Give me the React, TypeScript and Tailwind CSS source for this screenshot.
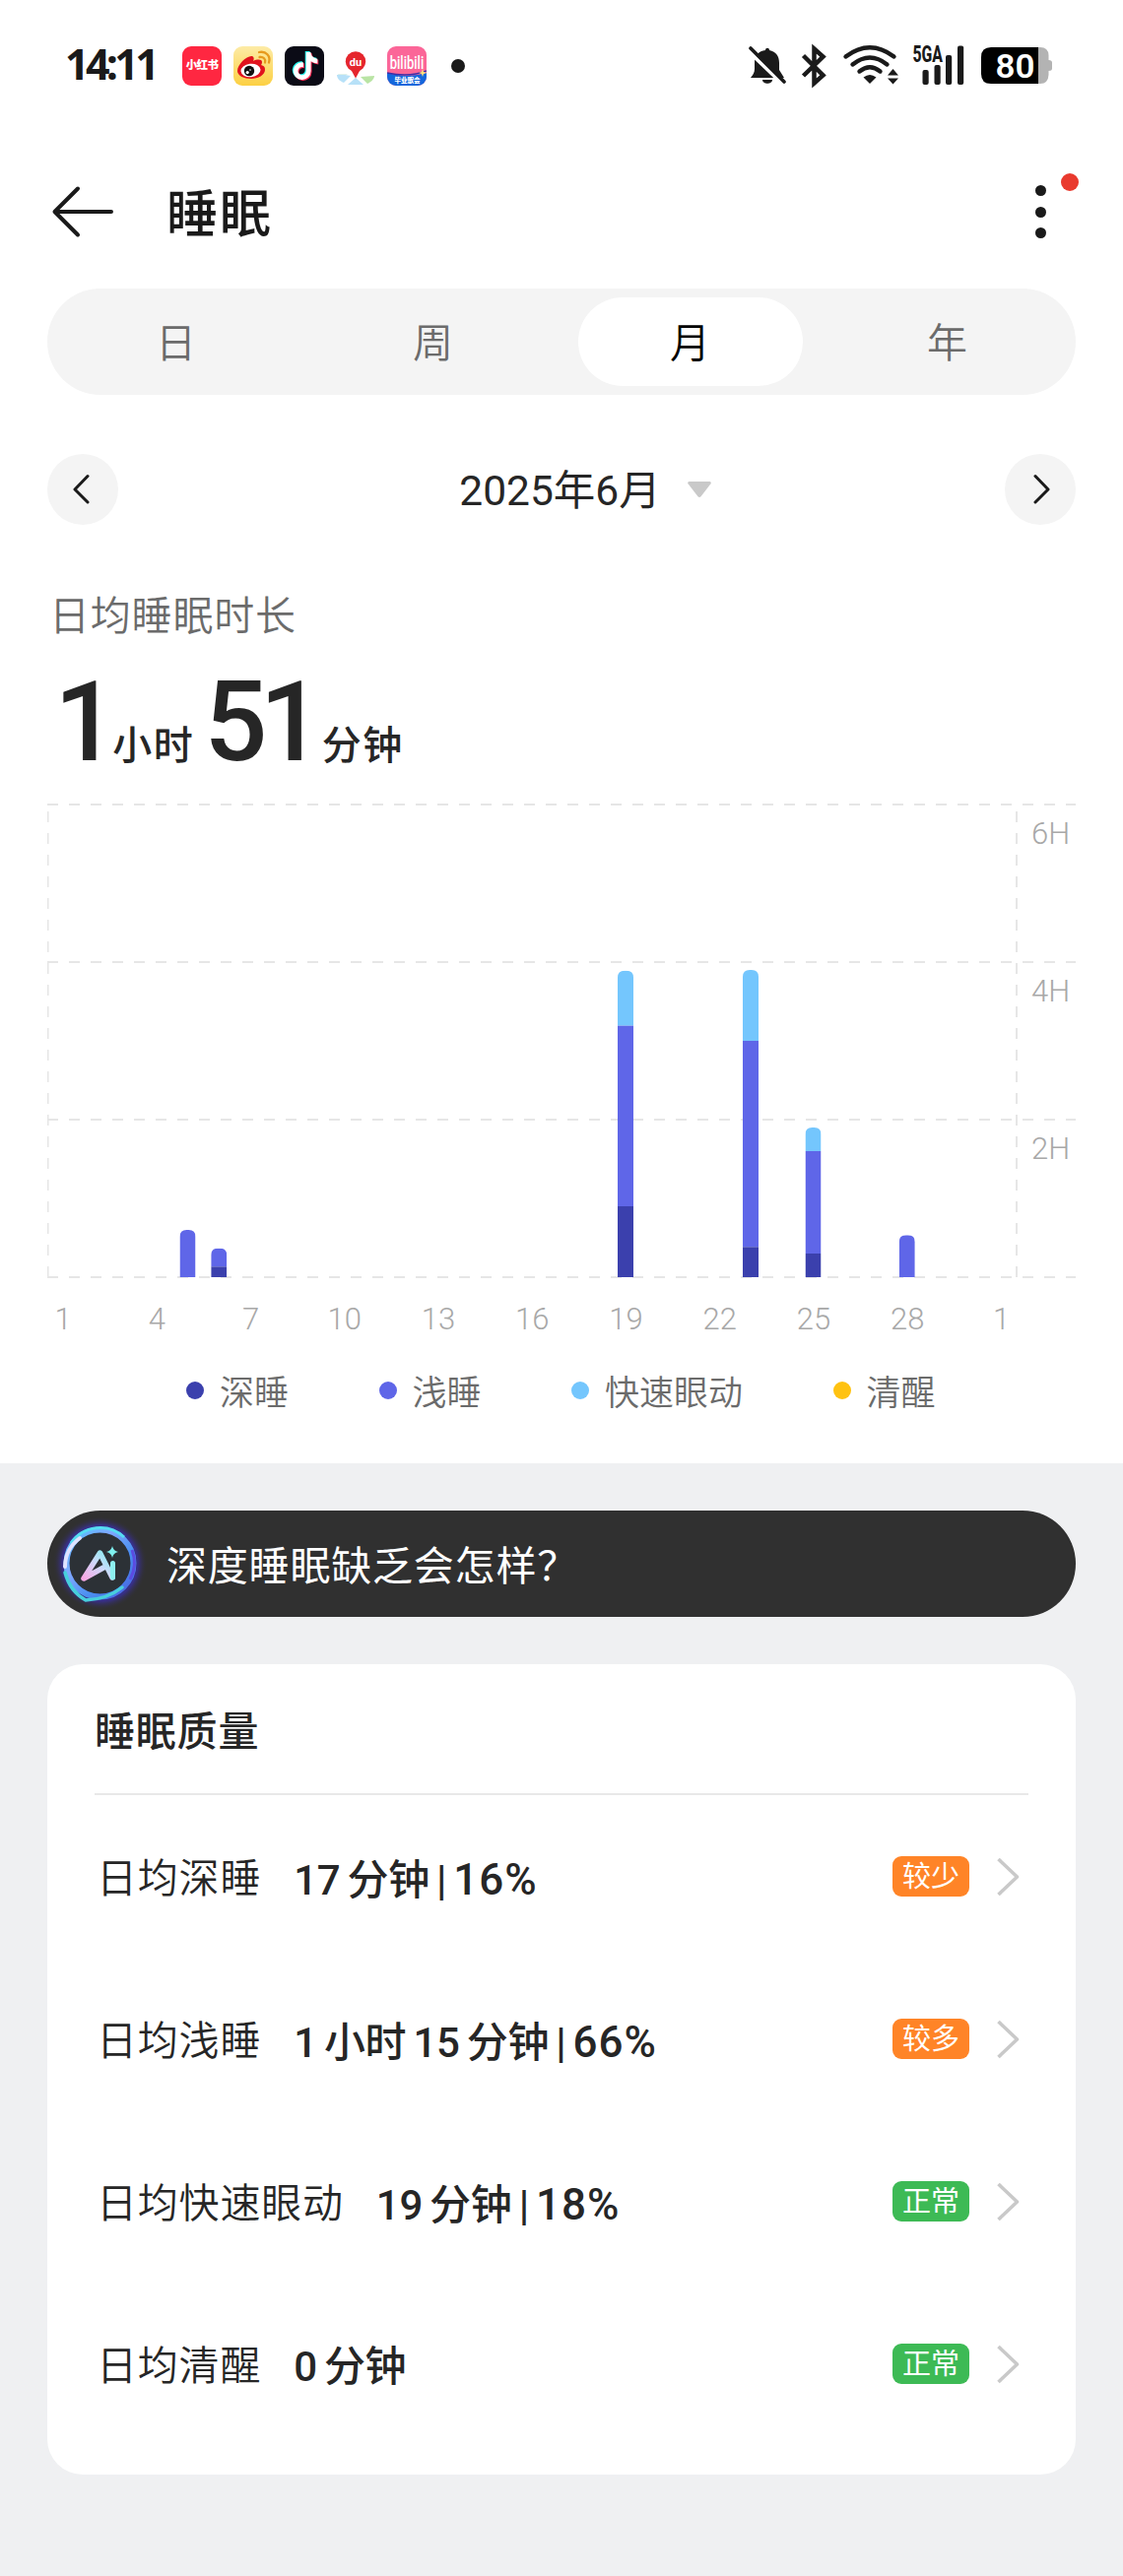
import React, { useState } from 'react';
import { FaTiktok } from 'react-icons/fa';

const FONT = "font-[Roboto,'Noto_Sans_CJK_SC',sans-serif]";

const COLORS = {
  deep: '#3b40ad',
  light: '#5f66e8',
  rem: '#74c6fd',
  awake: '#ffc211',
};

const TABS = ['日', '周', '月', '年'];

const LEGEND = [
  { label: '深睡', color: COLORS.deep },
  { label: '浅睡', color: COLORS.light },
  { label: '快速眼动', color: COLORS.rem },
  { label: '清醒', color: COLORS.awake },
];

// minutes of each stage, keyed by day of month
const SLEEP_DATA = [
  { day: 5, deep: 0, light: 36, rem: 0 },
  { day: 6, deep: 8, light: 14, rem: 0 },
  { day: 19, deep: 54, light: 137.5, rem: 42 },
  { day: 23, deep: 23, light: 157, rem: 54 },
  { day: 25, deep: 18, light: 78, rem: 18 },
  { day: 28, deep: 0, light: 32, rem: 0 },
];

const QUALITY = [
  { label: '日均深睡', value: '17 分钟', percent: '16%', tag: '较少', good: false },
  { label: '日均浅睡', value: '1 小时 15 分钟', percent: '66%', tag: '较多', good: false },
  { label: '日均快速眼动', value: '19 分钟', percent: '18%', tag: '正常', good: true },
  { label: '日均清醒', value: '0 分钟', percent: '', tag: '正常', good: true },
];

const AppIcons = () => (
  <div className="ml-[29px] flex items-center gap-3">
    <div className="flex size-10 items-center justify-center rounded-[9px] bg-[#ff2741] text-[11.5px] font-black tracking-[-0.6px] text-white">
      小红书
    </div>
    <svg className="size-10" viewBox="0 0 40 40">
      <defs>
        <linearGradient id="weibo" x1="0" y1="0" x2="0" y2="1">
          <stop offset="0" stopColor="#fdeba6" />
          <stop offset="1" stopColor="#fcd043" />
        </linearGradient>
      </defs>
      <rect width="40" height="40" rx="9" fill="url(#weibo)" />
      <path d="M4 25C4 18 14 9 19 10c2 1 2 3 1 5 4-2 9-2 9 1 0 2-1 3-1 3 4 1 4 3 4 5 0 5-7 9-14 9S4 30 4 25z" fill="#e1131d" />
      <ellipse cx="17.500" cy="24.500" rx="10" ry="6.800" fill="#fff" transform="rotate(-6 17.5 24.5)" />
      <circle cx="16" cy="25" r="5.200" fill="#111" />
      <circle cx="14.200" cy="26.600" r="1.600" fill="#fff" />
      <circle cx="17" cy="24" r=".8" fill="#fff" />
      <path d="M26.500 11c4-.5 6.500 2 5.500 5.500M26 6c7-1.500 12 4 10 10.500" fill="none" stroke="#e79a1e" strokeWidth="2.300" strokeLinecap="round" />
    </svg>
    <div className="relative size-10 rounded-[9px] bg-[#0b0b16]">
      <FaTiktok className="absolute left-[6px] top-[5px] size-[28px] text-[#25f4ee]" />
      <FaTiktok className="absolute left-[8px] top-[7px] size-[28px] text-[#fe2c55]" />
      <FaTiktok className="absolute left-[7px] top-[6px] size-[28px] text-white" />
    </div>
    <svg className="size-10" viewBox="0 0 40 40">
      <path d="M2 28h10l-5 4c-3-1-5-2-5-4z" fill="#dff1ea" />
      <path d="M1 29h8l6 1-7 7C3 35 1 32 1 29z" fill="#b7e1f8" />
      <path d="M20 32l8 7H12z" fill="#b7e1f8" />
      <path d="M25 31l14-1c0 3-3 6-7 8z" fill="#b9e4a4" />
      <path d="M20 32.500l-7-13h14z" fill="#e5262d" />
      <circle cx="20" cy="15.500" r="10.200" fill="#e5262d" />
      <text x="20" y="19.500" textAnchor="middle" fontSize="11" fontWeight="700" fill="#fff">du</text>
    </svg>
    <svg className="size-10" viewBox="0 0 40 40">
      <defs>
        <clipPath id="bili"><rect width="40" height="40" rx="9" /></clipPath>
      </defs>
      <g clipPath="url(#bili)">
        <rect width="40" height="40" fill="#fb6698" />
        <path d="M0 27q20 6 40 0v13H0z" fill="#1467dc" />
        <path d="M0 27q22 5 40-2" fill="none" stroke="#3b2fa8" strokeWidth="1.500" />
        <path d="M36 23l1 3 3 1-3 1-1 3-1-3-3-1 3-1z" fill="#ffe27a" />
      </g>
      <text x="20" y="17" textAnchor="middle" fontSize="13" fontWeight="500" fill="#fff" transform="scale(1 1.35)">bilibili</text>
      <text x="20.500" y="36.500" textAnchor="middle" fontSize="6.500" fontWeight="900" fill="#fff">毕业歌会</text>
    </svg>
    <span className="ml-[13px] size-3.5 rounded-full bg-[#1a1a1a]" />
  </div>
);

const SystemIcons = () => (
  <svg className="h-[68px] w-[312px]" viewBox="758 32 312 68" fill="#1a1a1a">
    {/* muted bell */}
    <path d="M777 50c0-3 4-3 4 0 7 1.500 10 6 10 13v7l5 8h-34c2-3 4-5 4-9v-7c0-7 4-11 11-12z" />
    <path d="M774 80h10c0 5-10 5-10 0z" />
    <path d="M760.500 51.500l36.500 35" stroke="#fff" strokeWidth="4" />
    <path d="M762 48l34 34" stroke="#1a1a1a" strokeWidth="3.600" strokeLinecap="round" />
    {/* bluetooth */}
    <path d="M815.500 55.500l20 20-9 8V48.500l9 8-20 19.500" fill="none" stroke="#1a1a1a" strokeWidth="4.500" />
    {/* wifi */}
    <g fill="none" stroke="#1a1a1a" strokeWidth="4.400" strokeLinecap="round">
      <path d="M858.500 56.500q24.500-18.500 49 0" />
      <path d="M865.500 64.500q17.500-14 35 0" />
      <path d="M872.500 71.500q10.500-8.500 21 0" />
    </g>
    <path d="M876.500 77.500q6.500-5 13 0l-6.500 6.500z" />
    <path d="M901 75.500l5.500-6.500 5.500 6.500zM901 78.500l5.500 6 5.500-6z" />
    {/* mobile signal */}
    <text x="926.500" y="61.500" fontSize="23" fontWeight="800" textLength="30.500" lengthAdjust="spacingAndGlyphs">5GA</text>
    <rect x="936.500" y="70" width="6.200" height="15" rx="2" />
    <rect x="948.500" y="65" width="6.200" height="20" rx="2" />
    <rect x="960" y="55" width="6.200" height="30" rx="2" />
    <rect x="972" y="45.500" width="6.200" height="39.500" rx="2" />
    {/* battery */}
    <path d="M1054 47h2q8 0 8.500 8v5q3.500 0 3.500 2.500v6q0 2.500-3.500 2.500v4q-.5 9-8.500 9h-2z" fill="#b3b3b3" />
    <path d="M1006 47h48v37h-48q-10 0-10-10V57q0-10 10-10z" fill="#000" />
    <text x="1010.500" y="77.500" fontSize="34" fontWeight="600" fill="#fff" textLength="40" lengthAdjust="spacingAndGlyphs">80</text>
  </svg>
);

const StatusBar = () => (
  <div className="flex h-[137px] items-center justify-between pb-1 pl-[66px] pr-[70px]">
    <div className="flex items-center">
      <span className="w-[90px] whitespace-nowrap pb-1 font-['Open_Sans'] text-[43px] font-bold leading-none tracking-[-3.700px] text-[#1a1a1a]">14:11</span>
      <AppIcons />
    </div>
    <SystemIcons />
  </div>
);

const Header = () => (
  <header className="flex h-[156px] items-center pl-[52px] pr-[48px]">
    <svg className="h-[54px] w-16" viewBox="0 0 64 54" fill="none" stroke="#1a1a1a" strokeWidth="4" strokeLinecap="round" strokeLinejoin="round">
      <path d="M27 3.500L3.500 27L27 50.500M3.500 27H61" />
    </svg>
    <h1 className="ml-[53px] pt-[7px] text-[52px] font-medium leading-none tracking-[2px] text-[#1a1a1a]">睡眠</h1>
    <div className="relative ml-auto flex w-[72px] flex-col items-center gap-[10.500px]">
      <span className="size-[11px] rounded-full bg-[#1a1a1a]" />
      <span className="size-[11px] rounded-full bg-[#1a1a1a]" />
      <span className="size-[11px] rounded-full bg-[#1a1a1a]" />
      <span className="absolute -top-[12px] left-[57px] size-[18px] rounded-full bg-[#e93a2e]" />
    </div>
  </header>
);

const RoundButton: React.FC<{ d: string }> = ({ d }) => (
  <button className="flex size-[72px] items-center justify-center rounded-full bg-[#f4f4f4]">
    <svg className="size-8" viewBox="0 0 32 32" fill="none" stroke="#1a1a1a" strokeWidth="3" strokeLinecap="round" strokeLinejoin="round">
      <path d={d} />
    </svg>
  </button>
);

const CHART_TOP = 1;
const HOUR = 80;
const BASE = CHART_TOP + 6 * HOUR;
const dayX = (day: number) => 15.5 + (day - 1) * 31.75;

const SleepChart = () => (
  <svg className="h-[550px] w-[1044px]" viewBox="0 0 1044 550">
    <g stroke="#e6e6e6" strokeWidth="2" strokeDasharray="11 11">
      {[0, 2, 4, 6].map(h => (
        <line key={h} x1={0} x2={1044} y1={BASE - h * HOUR} y2={BASE - h * HOUR} />
      ))}
      <line x1={0.5} x2={0.5} y1={BASE} y2={CHART_TOP} />
      <line x1={984} x2={984} y1={BASE} y2={CHART_TOP} />
    </g>
    <g fontSize="31" fontWeight="300" fill="#a8a8a8">
      {[2, 4, 6].map(h => (
        <text key={h} x={999} y={BASE - h * HOUR + 40}>{h}H</text>
      ))}
      {[1, 4, 7, 10, 13, 16, 19, 22, 25, 28, 31].map(day => (
        <text key={day} x={dayX(day) + 0.5} y={533.5} textAnchor="middle">{day === 31 ? 1 : day}</text>
      ))}
    </g>
    {SLEEP_DATA.map(({ day, deep, light, rem }) => {
      const px = (min: number) => (min / 60) * HOUR;
      const x = dayX(day) - 8;
      const total = px(deep + light + rem);
      return (
        <g key={day}>
          <clipPath id={`bar-${day}`}>
            <path d={`M${x} ${BASE}v${7 - total}q0-7 7-7h2q7 0 7 7v${total - 7}z`} />
          </clipPath>
          <g clipPath={`url(#bar-${day})`}>
            <rect x={x} y={BASE - total} width={16} height={px(rem)} fill={COLORS.rem} />
            <rect x={x} y={BASE - px(deep + light)} width={16} height={px(light)} fill={COLORS.light} />
            <rect x={x} y={BASE - px(deep)} width={16} height={px(deep)} fill={COLORS.deep} />
          </g>
        </g>
      );
    })}
  </svg>
);

const AiBadge = () => (
  <svg className="size-[108px]" viewBox="0 0 108 108" fill="none">
    <defs>
      <linearGradient id="ring" x1="0" y1="0" x2="1" y2="1">
        <stop offset="0" stopColor="#4fc3ff" />
        <stop offset=".35" stopColor="#7fa8ff" />
        <stop offset=".65" stopColor="#4a8ff0" />
        <stop offset="1" stopColor="#4a5fe0" />
      </linearGradient>
      <linearGradient id="mark" x1="0" y1="1" x2="1" y2="0">
        <stop offset="0" stopColor="#f7a8e4" />
        <stop offset=".5" stopColor="#cfd8fb" />
        <stop offset="1" stopColor="#7ff0ee" />
      </linearGradient>
      <radialGradient id="glow">
        <stop offset=".6" stopColor="#232a3a" />
        <stop offset=".8" stopColor="#3a2fa0" stopOpacity=".8" />
        <stop offset="1" stopColor="#303030" stopOpacity="0" />
      </radialGradient>
    </defs>
    <circle cx="53.500" cy="53.500" r="48" fill="url(#glow)" />
    <circle cx="53.500" cy="53.500" r="31" fill="#2c3136" />
    <circle cx="53.500" cy="53.500" r="34" stroke="url(#ring)" strokeWidth="6" />
    <path d="M24 33a36 36 0 0 1 54-6" stroke="#55dcf2" strokeWidth="3" />
    <path d="M18 57a36 36 0 0 1 15-29" stroke="#e0e2ff" strokeWidth="4" strokeLinecap="round" />
    <path d="M84 70a36 36 0 0 0 2-30" stroke="#5b4be0" strokeWidth="3" />
    <path d="M18 63q5 19 21 28 22-1 37-13" stroke="#47cfdc" strokeWidth="3.500" strokeLinecap="round" strokeLinejoin="round" />
    <path d="M66 68L53.500 43L37 69L57 58" stroke="url(#mark)" strokeWidth="5.500" strokeLinecap="round" strokeLinejoin="round" />
    <path d="M66.500 53.500V68" stroke="#8df0f0" strokeWidth="5" strokeLinecap="round" />
    <path d="M66 36q1 5 6 6q-5 1-6 6q-1-5-6-6q5-1 6-6z" fill="#7ff0ee" />
  </svg>
);

export default function App() {
  const [tab, setTab] = useState('月');

  return (
    <div className={`h-[2616px] w-[1140px] overflow-hidden bg-[#eff0f2] ${FONT}`}>
      <section className="h-[1486px] bg-white">
        <StatusBar />
        <Header />

        <nav className="mx-12 grid h-[108px] grid-cols-4 rounded-full bg-[#f4f4f4] py-[9px]">
          {TABS.map(t => (
            <button
              key={t}
              onClick={() => setTab(t)}
              className={`mx-[16.500px] rounded-full pt-[5px] text-[41px] font-[350] leading-none ${t === tab ? 'bg-white text-black' : 'text-[#6b6b6b]'}`}
            >
              {t}
            </button>
          ))}
        </nav>

        <div className="mx-12 mt-[60px] flex items-center justify-between">
          <RoundButton d="M21 2.500L8 16L21 29" />
          <div className="flex items-center gap-[27px] pl-12">
            <span className="pt-[5px] text-[42.500px] leading-none text-[#262626]">2025年6月</span>
            <svg className="h-4 w-6" viewBox="0 0 24 16">
              <path d="M1.500 0h21q2 .5 1 2.200l-10 13q-1.500 1.600-3 0l-10-13Q-.5.500 1.500 0z" fill="#c9c9c9" />
            </svg>
          </div>
          <RoundButton d="M11 2.500L24 16L11 29" />
        </div>

        <p className="ml-[50px] mt-[63px] text-[41px] font-[350] leading-[61px] tracking-[0.800px] text-[#6b6b6b]">日均睡眠时长</p>

        <div className="ml-[55px] flex h-[159px] items-baseline whitespace-nowrap text-[#262626]">
          <span className="text-[113px] font-medium leading-[154px] tracking-[-5px]">1</span>
          <span className="-translate-y-px text-[40px] font-medium tracking-[1.500px]">小时</span>
          <span className="ml-[10px] text-[113px] font-medium leading-[154px] tracking-[-8px]">51</span>
          <span className="ml-[7px] -translate-y-px text-[40px] font-medium tracking-[1.500px]">分钟</span>
        </div>

        <div className="ml-12">
          <SleepChart />
        </div>

        <div className="ml-[189px] mt-[22px] flex h-12 items-center gap-[91.500px]">
          {LEGEND.map(item => (
            <div key={item.label} className="flex items-center gap-4">
              <span className="size-[18px] rounded-full" style={{ backgroundColor: item.color }} />
              <span className="pt-[6px] text-[35px] font-[350] leading-none text-[#6b6b6b]">{item.label}</span>
            </div>
          ))}
        </div>
      </section>

      <section className="mx-12 mt-12 flex h-[108px] items-center rounded-full bg-[#303030]">
        <AiBadge />
        <span className="ml-[13px] pt-[7px] text-[41px] leading-none tracking-[0.800px] text-white">深度睡眠缺乏会怎样？</span>
      </section>

      <section className="mx-12 mt-12 h-[823px] rounded-[36px] bg-white px-12">
        <h2 className="flex h-[133px] items-center border-b-2 border-[#e8e8e8] pt-2 text-[41px] font-medium tracking-[0.800px] text-[#262626]">
          睡眠质量
        </h2>
        {QUALITY.map(row => (
          <div key={row.label} className="flex h-[165px] items-center whitespace-nowrap text-[#262626]">
            <span className="ml-0.5 pt-[6px] text-[41px] font-[350] leading-none tracking-[0.800px]">{row.label}</span>
            <span className="ml-[33px] pt-[6px] text-[42px] font-medium leading-none tracking-[-0.300px] [word-spacing:-3px]">
              {row.value}
              {row.percent && (
                <>
                  {' | '}
                  <span className="text-[44px] tracking-[1px]">{row.percent}</span>
                </>
              )}
            </span>
            <span className={`ml-auto flex h-[41px] w-[78px] items-center justify-center rounded-[9px] pt-0.5 text-[29px] leading-none text-white ${row.good ? 'bg-[#3dba55]' : 'bg-[#ff8427]'}`}>
              {row.tag}
            </span>
            <svg className="ml-7 mr-[9px] h-10 w-[23px]" viewBox="0 0 23 40" fill="none" stroke="#c9c9c9" strokeWidth="3.600" strokeLinejoin="round">
              <path d="M1.500 2L20.500 20L1.500 38" />
            </svg>
          </div>
        ))}
      </section>
    </div>
  );
}
